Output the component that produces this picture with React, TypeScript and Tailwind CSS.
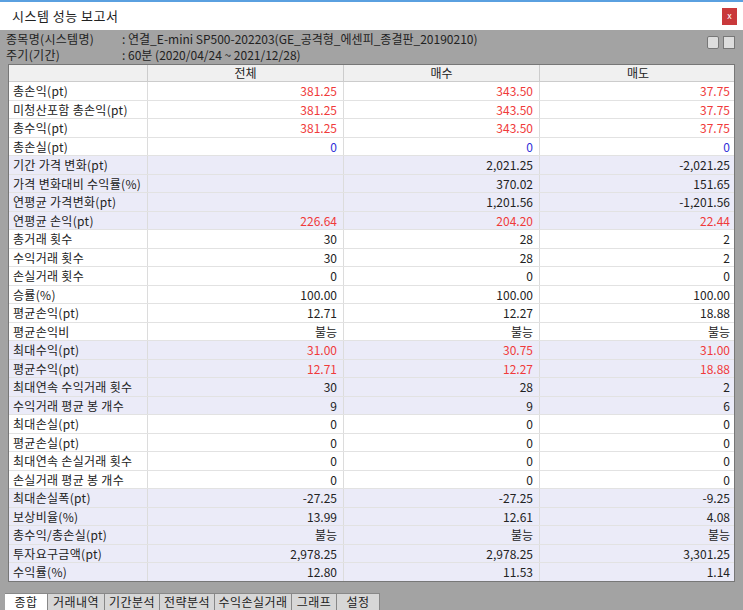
import React from "react";

type Row = [string, string, string, string, string?, boolean?];
const R = "r", B = "b";
const rows: Row[] = [
  ["총손익(pt)", "381.25", "343.50", "37.75", R],
  ["미청산포함 총손익(pt)", "381.25", "343.50", "37.75", R],
  ["총수익(pt)", "381.25", "343.50", "37.75", R],
  ["총손실(pt)", "0", "0", "0", B],
  ["기간 가격 변화(pt)", "", "2,021.25", "-2,021.25", "", true],
  ["가격 변화대비 수익률(%)", "", "370.02", "151.65", "", true],
  ["연평균 가격변화(pt)", "", "1,201.56", "-1,201.56", "", true],
  ["연평균 손익(pt)", "226.64", "204.20", "22.44", R, true],
  ["총거래 횟수", "30", "28", "2"],
  ["수익거래 횟수", "30", "28", "2"],
  ["손실거래 횟수", "0", "0", "0"],
  ["승률(%)", "100.00", "100.00", "100.00"],
  ["평균손익(pt)", "12.71", "12.27", "18.88"],
  ["평균손익비", "불능", "불능", "불능"],
  ["최대수익(pt)", "31.00", "30.75", "31.00", R, true],
  ["평균수익(pt)", "12.71", "12.27", "18.88", R, true],
  ["최대연속 수익거래 횟수", "30", "28", "2", "", true],
  ["수익거래 평균 봉 개수", "9", "9", "6", "", true],
  ["최대손실(pt)", "0", "0", "0"],
  ["평균손실(pt)", "0", "0", "0"],
  ["최대연속 손실거래 횟수", "0", "0", "0"],
  ["손실거래 평균 봉 개수", "0", "0", "0"],
  ["최대손실폭(pt)", "-27.25", "-27.25", "-9.25", "", true],
  ["보상비율(%)", "13.99", "12.61", "4.08", "", true],
  ["총수익/총손실(pt)", "불능", "불능", "불능", "", true],
  ["투자요구금액(pt)", "2,978.25", "2,978.25", "3,301.25", "", true],
  ["수익률(%)", "12.80", "11.53", "1.14", "", true],
];

const tabs: [string, number][] = [
  ["종합", 43], ["거래내역", 57], ["기간분석", 55], ["전략분석", 55], ["수익손실거래", 77], ["그래프", 45], ["설정", 43],
];

export default function App() {
  return (
    <div
      className="w-[743px] h-[610px] flex flex-col bg-[#a3a3a3] overflow-hidden text-[12px] text-[#222]"
      style={{ fontFamily: '"Noto Sans CJK KR", "Noto Sans", sans-serif' }}
    >
      <div className="h-[30px] shrink-0 bg-white border-t-2 border-[#5aa0e0] flex items-center justify-between pl-[12px] pr-[6px]">
        <span className="text-[13px] text-[#222] tracking-[0.5px]">시스템 성능 보고서</span>
        <div className="w-[15px] h-[17px] bg-[#c9393b] text-white text-[9px] flex items-center justify-center">x</div>
      </div>
      <div className="shrink-0 flex pl-[6px] pr-[8px] pt-[1px] h-[34px] text-[#222] leading-[16px]">
        <div className="w-[116px] tracking-[0.3px]">
          <div>종목명(시스템명)</div>
          <div>주기(기간)</div>
        </div>
        <div className="flex-1">
          <div>: 연결_E-mini SP500-202203(GE_공격형_에센피_종결판_20190210)</div>
          <div>: 60분 (2020/04/24 ~ 2021/12/28)</div>
        </div>
        <div className="flex gap-[4px] pt-[5px]">
          <div className="w-[12px] h-[13px] border border-[#777] rounded-[2px] bg-[#ddd]" />
          <div className="w-[12px] h-[13px] border border-[#777] bg-[#ddd]" />
        </div>
      </div>
      <div className="mx-[8px] h-[518px] shrink-0 bg-white border border-[#777] overflow-hidden">
        <div className="grid grid-cols-[139px_196px_196px_196px] h-[17px] leading-[16px] bg-[#f0f0f0] border-b border-[#ccc]">
          <div className="border-r border-[#ccc]" />
          <div className="text-center border-r border-[#ccc]">전체</div>
          <div className="text-center border-r border-[#ccc]">매수</div>
          <div className="text-center">매도</div>
        </div>
        {rows.map((r, i) => {
          const c = r[4] === R ? "text-[#f03a3a]" : r[4] === B ? "text-[#3030d8]" : "";
          return (
            <div
              key={i}
              className={`grid grid-cols-[139px_196px_196px_196px] h-[18.5px] leading-[17.5px] border-b border-[#e2e2e2] ${r[5] ? "bg-[#ebebf8]" : "bg-white"}`}
            >
              <div className="pl-[4px] border-r border-[#dcdcdc] whitespace-nowrap tracking-[0.3px]">{r[0]}</div>
              <div className={`text-right pr-[6px] border-r border-[#dcdcdc] ${c}`}>{r[1]}</div>
              <div className={`text-right pr-[6px] border-r border-[#dcdcdc] ${c}`}>{r[2]}</div>
              <div className={`text-right pr-[6px] ${c}`}>{r[3]}</div>
            </div>
          );
        })}
      </div>
      <div className="flex-1" />
      <div className="h-[18px] shrink-0 flex pl-[5px] items-end">
        {tabs.map(([t, w], i) => (
          <div
            key={t}
            style={{ width: w }}
            className={`h-[17px] text-center tracking-[0.5px] leading-[16px] border-r border-t border-[#888] text-[12px] ${i === 0 ? "bg-white" : "bg-[#d7d7d7]"}`}
          >
            {t}
          </div>
        ))}
      </div>
    </div>
  );
}
